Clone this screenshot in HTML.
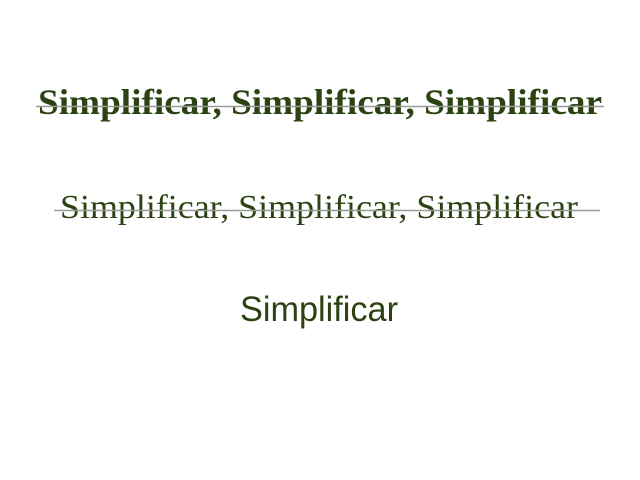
<!DOCTYPE html>
<html><head><style>html,body{margin:0;padding:0;background:#fff;width:640px;height:480px;overflow:hidden}</style></head>
<body>
<svg width="640" height="480" xmlns="http://www.w3.org/2000/svg">
<text x="38" y="114" textLength="564" lengthAdjust="spacingAndGlyphs" font-family="Liberation Serif, serif" font-weight="bold" font-size="36" fill="#2b4212">Simplificar, Simplificar, Simplificar</text>
<line x1="36" y1="106.5" x2="604" y2="106.5" stroke="#9a9a9a" stroke-width="1.5"/>
<text x="60" y="218" textLength="518" lengthAdjust="spacingAndGlyphs" font-family="Liberation Serif, serif" font-size="34" fill="#2b4212">Simplificar, Simplificar, Simplificar</text>
<line x1="54" y1="210.5" x2="600" y2="210.5" stroke="#9a9a9a" stroke-width="1.5"/>
<text x="240" y="321" textLength="158" lengthAdjust="spacingAndGlyphs" font-family="Liberation Sans, sans-serif" font-size="35" fill="#2b4212">Simplificar</text>
</svg>
</body></html>
